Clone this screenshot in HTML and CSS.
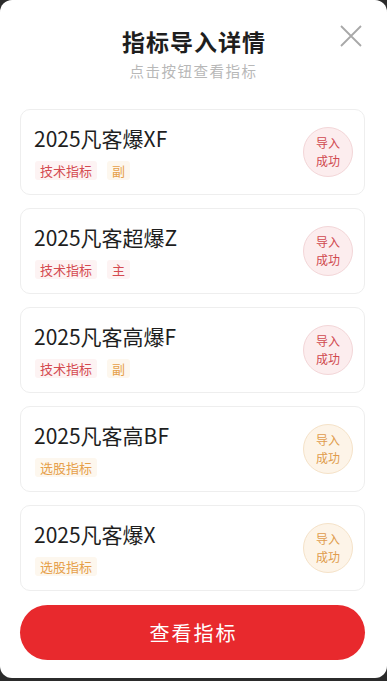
FILE: index.html
```html
<!DOCTYPE html>
<html lang="zh">
<head>
<meta charset="utf-8">
<link rel="stylesheet" href="styles.css">
</head>
<body>
<div class="modal">
  <div class="header">
    <div class="title">指标导入详情</div>
    <div class="subtitle">点击按钮查看指标</div>
    <svg class="close" width="22" height="22" viewBox="0 0 22 22"><path d="M1 1L21 21M21 1L1 21" stroke="#a8a8a8" stroke-width="1.8" fill="none"/></svg>
  </div>
  <div class="list">
    <div class="card">
      <div class="info">
        <div class="name">2025凡客爆XF</div>
        <div class="tags"><span class="tag red">技术指标</span><span class="tag orange">副</span></div>
      </div>
      <div class="badge red-badge"><span>导入</span><span>成功</span></div>
    </div>
    <div class="card">
      <div class="info">
        <div class="name">2025凡客超爆Z</div>
        <div class="tags"><span class="tag red">技术指标</span><span class="tag red">主</span></div>
      </div>
      <div class="badge red-badge"><span>导入</span><span>成功</span></div>
    </div>
    <div class="card">
      <div class="info">
        <div class="name">2025凡客高爆F</div>
        <div class="tags"><span class="tag red">技术指标</span><span class="tag orange">副</span></div>
      </div>
      <div class="badge red-badge"><span>导入</span><span>成功</span></div>
    </div>
    <div class="card">
      <div class="info">
        <div class="name">2025凡客高BF</div>
        <div class="tags"><span class="tag orange">选股指标</span></div>
      </div>
      <div class="badge orange-badge"><span>导入</span><span>成功</span></div>
    </div>
    <div class="card">
      <div class="info">
        <div class="name">2025凡客爆X</div>
        <div class="tags"><span class="tag orange">选股指标</span></div>
      </div>
      <div class="badge orange-badge"><span>导入</span><span>成功</span></div>
    </div>
  </div>
  <div class="footer">
    <div class="btn">查看指标</div>
  </div>
</div>
</body>
</html>
```
FILE: styles.css
```css
html, body {
  margin: 0;
  padding: 0;
  background: #2b2b2b;
}
body {
  width: 387px;
  height: 681px;
  overflow: hidden;
  font-family: "Noto Sans CJK SC", "Noto Sans", sans-serif;
}
.modal {
  height: 678px;
  background: #fff;
  border-radius: 12px;
  box-sizing: border-box;
  display: flex;
  flex-direction: column;
}
.header {
  position: relative;
  height: 109px;
  display: flex;
  flex-direction: column;
  align-items: center;
  box-sizing: border-box;
  padding-top: 24px;
}
.title {
  font-size: 23px;
  font-weight: 700;
  color: #1e1e1e;
  line-height: 34px;
  letter-spacing: 1px;
  padding-left: 1px;
}
.subtitle {
  font-size: 14.5px;
  color: #b8b8b8;
  line-height: 20px;
  margin-top: 3px;
  letter-spacing: 1.5px;
}
.close {
  position: absolute;
  right: 25px;
  top: 25px;
}
.list {
  display: flex;
  flex-direction: column;
  gap: 13px;
  padding: 0 22px 0 20px;
}
.card {
  height: 86px;
  border: 1px solid #eeeeee;
  border-radius: 10px;
  box-sizing: border-box;
  display: flex;
  align-items: center;
  justify-content: space-between;
  padding: 0 11px 0 13px;
}
.info {
  display: flex;
  flex-direction: column;
  align-self: flex-start;
  padding-top: 12px;
}
.name {
  font-size: 21px;
  color: #1e1e1e;
  line-height: 32px;
}
.tags {
  display: flex;
  gap: 10px;
  margin-top: 7px;
  margin-left: 1px;
}
.tag {
  font-size: 13px;
  line-height: 19px;
  padding: 0 5px;
  border-radius: 3px;
}
.tag.red {
  color: #d44a50;
  background: #fdf3f3;
}
.tag.orange {
  color: #e6a04a;
  background: #fdf7ee;
}
.badge {
  width: 50px;
  height: 50px;
  border-radius: 50%;
  display: flex;
  flex-direction: column;
  align-items: center;
  justify-content: center;
  font-size: 12px;
  line-height: 18px;
  box-sizing: border-box;
}
.red-badge {
  background: #fcedee;
  border: 1px solid #f3d6d8;
  color: #d0494f;
}
.orange-badge {
  background: #fdf4e8;
  border: 1px solid #f5e2c8;
  color: #e09c4c;
}
.footer {
  padding: 14px 22px 0 20px;
}
.btn {
  height: 55px;
  border-radius: 28px;
  background: #e8292d;
  color: #fff;
  font-size: 20px;
  display: flex;
  align-items: center;
  justify-content: center;
  letter-spacing: 2px;
  padding-left: 2px;
}
```
